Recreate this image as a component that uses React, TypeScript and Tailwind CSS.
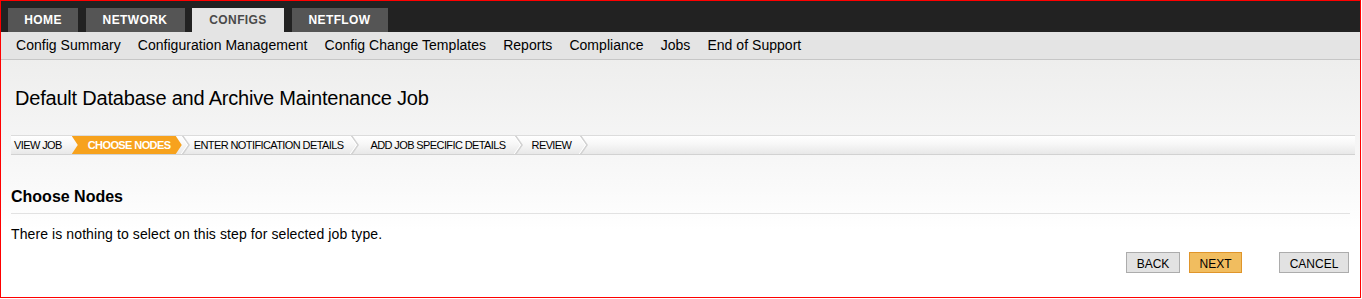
import React from "react";

const Sep = ({ className = "" }: { className?: string }) => (
  <svg width="10" height="18" viewBox="0 0 10 18" className={className}>
    <path d="M1 -1 L8 9 L1 19" stroke="#d2d2d2" strokeWidth="1.6" fill="none" />
    <path d="M-0.5 -1 L6.5 9 L-0.5 19" stroke="#ffffff" strokeWidth="1" fill="none" />
  </svg>
);

const tabs = [
  { label: "HOME", w: "w-[70px]", active: false },
  { label: "NETWORK", w: "w-[99px]", active: false },
  { label: "CONFIGS", w: "w-[92px]", active: true },
  { label: "NETFLOW", w: "w-[96px]", active: false },
];

const subnav = [
  "Config Summary",
  "Configuration Management",
  "Config Change Templates",
  "Reports",
  "Compliance",
  "Jobs",
  "End of Support",
];

export default function App() {
  return (
    <div className="w-[1361px] h-[298px] border border-[#ff0000] flex flex-col bg-white font-['Liberation_Sans',Arial,sans-serif] text-black">
      {/* top tabs */}
      <div className="h-[31px] bg-[#222222] flex items-end pl-[7px] gap-[7.5px] shrink-0">
        {tabs.map((t) => (
          <div
            key={t.label}
            className={`${t.w} h-[24px] flex items-center justify-center text-[12px] font-bold tracking-[0.4px] ${
              t.active ? "bg-[#e4e4e4] text-[#4a4a4a]" : "bg-[#555555] text-white"
            }`}
          >
            {t.label}
          </div>
        ))}
      </div>
      {/* sub nav */}
      <div className="h-[28px] bg-[#e4e4e4] border-b border-[#c6c6c6] flex items-center pl-[15px] gap-[17px] text-[14px] tracking-[0.035px] shrink-0">
        {subnav.map((s) => (
          <span key={s}>{s}</span>
        ))}
      </div>
      {/* content */}
      <div className="flex-1 bg-[linear-gradient(to_bottom,#eeeeed_0px,#f5f5f5_80px,#fafafa_130px,#ffffff_170px)]">
        <h1 className="pt-[27px] pl-[14px] text-[20px] leading-[22px] tracking-[-0.2px]">
          Default Database and Archive Maintenance Job
        </h1>
        {/* steps */}
        <div className="mt-[26px] ml-[10px] mr-[5px] h-[20px] border-t border-b border-t-[#dcdcdc] border-b-[#d2d2d2] bg-[linear-gradient(to_bottom,#ffffff,#f8f8f8_40%,#e8e8e8)] flex items-center text-[11px] tracking-[-0.6px] leading-none">
          <span className="pl-[3px]">VIEW JOB</span>
          <div className="ml-[10px] w-[110px] h-[18px] bg-[#f7a21d] text-white font-bold flex items-center pl-[16px] [clip-path:polygon(0_0,calc(100%_-_6px)_0,100%_50%,calc(100%_-_6px)_100%,0_100%,6px_50%)]">
            CHOOSE NODES
          </div>
          <Sep className="-ml-[1px]" />
          <span className="ml-[3px]">ENTER NOTIFICATION DETAILS</span>
          <Sep className="ml-[7px]" />
          <span className="ml-[10px]">ADD JOB SPECIFIC DETAILS</span>
          <Sep className="ml-[8px]" />
          <span className="ml-[8px]">REVIEW</span>
          <Sep className="ml-[8px]" />
        </div>
        {/* choose nodes */}
        <div className="mt-[33px] mx-[10px]">
          <h2 className="text-[16px] leading-[18px] font-bold pb-[7px] border-b border-[#e2e2e2]">
            Choose Nodes
          </h2>
          <p className="mt-[12px] text-[14px] leading-[16px] tracking-[0.1px]">
            There is nothing to select on this step for selected job type.
          </p>
        </div>
        <div className="mt-[10px] mr-[11px] flex justify-end text-[12px] leading-none">
          <button className="w-[54px] h-[21px] pt-[2px] bg-[#e2e2e2] border border-[#acacac] flex items-center justify-center">
            BACK
          </button>
          <button className="ml-[9px] w-[53px] h-[21px] pt-[2px] bg-[#f1bd5f] border border-[#e0952a] flex items-center justify-center">
            NEXT
          </button>
          <button className="ml-[37px] w-[70px] h-[21px] pt-[2px] bg-[#e2e2e2] border border-[#acacac] flex items-center justify-center">
            CANCEL
          </button>
        </div>
      </div>
    </div>
  );
}
